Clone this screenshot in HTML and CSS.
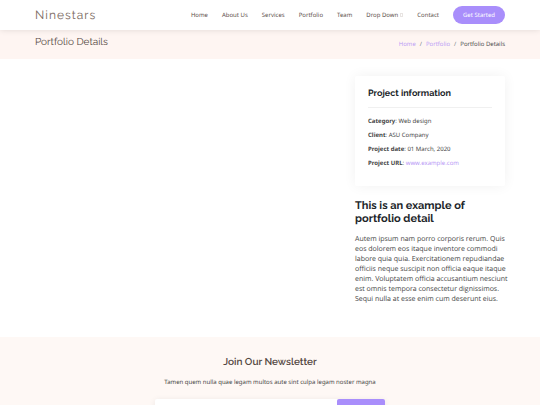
FILE: index.html
```html
<!DOCTYPE html>
<html lang="en">
<head>
    <meta charset="UTF-8">
    <meta name="viewport" content="width=device-width, initial-scale=1.0">
    <title>Portfolio Details - Ninestars</title>
    <link rel="stylesheet" href="styles.css">
</head>
<body>
    <header id="header">
        <div class="container bar">
            <a class="logo" href="#">Ninestars</a>
            <nav class="navbar">
                <a href="#">Home</a>
                <a href="#">About Us</a>
                <a href="#">Services</a>
                <a href="#">Portfolio</a>
                <a href="#">Team</a>
                <a href="#" class="dropdown">Drop Down <i class="glyph"></i></a>
                <a href="#">Contact</a>
                <a href="#" class="getstarted">Get Started</a>
            </nav>
        </div>
    </header>

    <main>
        <section class="breadcrumbs">
            <div class="container bar">
                <h2>Portfolio Details</h2>
                <ol>
                    <li><a href="#">Home</a></li>
                    <li><a href="#">Portfolio</a></li>
                    <li>Portfolio Details</li>
                </ol>
            </div>
        </section>

        <section class="portfolio-details">
            <div class="container details-grid">
                <div class="slider"></div>
                <div class="details">
                    <div class="portfolio-info">
                        <h3>Project information</h3>
                        <ul>
                            <li><strong>Category</strong>: Web design</li>
                            <li><strong>Client</strong>: ASU Company</li>
                            <li><strong>Project date</strong>: 01 March, 2020</li>
                            <li><strong>Project URL</strong>: <a href="#">www.example.com</a></li>
                        </ul>
                    </div>
                    <div class="portfolio-description">
                        <h2>This is an example of portfolio detail</h2>
                        <p>Autem ipsum nam porro corporis rerum. Quis eos dolorem eos itaque inventore commodi labore quia quia. Exercitationem repudiandae officiis neque suscipit non officia eaque itaque enim. Voluptatem officia accusantium nesciunt est omnis tempora consectetur dignissimos. Sequi nulla at esse enim cum deserunt eius.</p>
                    </div>
                </div>
            </div>
        </section>
    </main>

    <footer class="newsletter">
        <h4>Join Our Newsletter</h4>
        <p>Tamen quem nulla quae legam multos aute sint culpa legam noster magna</p>
        <form>
            <input type="email" name="email" aria-label="Email">
            <button type="submit">Subscribe</button>
        </form>
    </footer>
</body>
</html>
```
FILE: styles.css
```css
* {
    box-sizing: border-box;
}

body {
    margin: 0;
    font-family: "Open Sans", sans-serif;
    font-size: 7px;
    line-height: 10px;
    color: #444;
    background: #fff;
    text-rendering: geometricPrecision;
}

h2, h3, h4, p, ul, ol {
    margin: 0;
    padding: 0;
}

h2, h3, h4, .logo {
    font-family: "Raleway", "Lato", sans-serif;
}

ul, ol {
    list-style: none;
}

a {
    color: #b798f5;
    text-decoration: none;
}

.container {
    padding: 0 35px;
}

.bar {
    display: flex;
    align-items: center;
    justify-content: space-between;
}

.navbar, .portfolio-info ul, .newsletter {
    font-family: "Noto Sans", "Open Sans", sans-serif;
    font-size: 6px;
}

/* Header */
#header {
    position: relative;
    background: #fff;
    box-shadow: 0 0 6px rgba(0, 0, 0, 0.12);
}

#header .bar {
    height: 30px;
}

.logo {
    font-size: 12px;
    line-height: 16px;
    letter-spacing: 1px;
    color: #7a6960;
}

.navbar {
    display: flex;
    align-items: center;
    gap: 14px;
    white-space: nowrap;
}

.navbar a {
    color: #5c4f4a;
}

.dropdown {
    display: flex;
    align-items: center;
    gap: 2px;
}

.glyph {
    width: 3px;
    height: 4px;
    border: 1px solid #e8e4e2;
}

.navbar .getstarted {
    padding: 4px 10px;
    border-radius: 50px;
    color: #fff;
    background: #a98efb;
}

/* Breadcrumbs */
.breadcrumbs {
    padding: 6px 0 10px;
    background: #fef5f2;
}

.breadcrumbs .bar {
    align-items: flex-start;
}

.breadcrumbs h2 {
    font-size: 10px;
    line-height: 13px;
    font-weight: 400;
    color: #554843;
}

.breadcrumbs ol {
    display: flex;
    padding-top: 3px;
    font-size: 6px;
}

.breadcrumbs li + li::before {
    content: "/";
    padding: 0 4px;
    color: #6c757d;
}

/* Project */
.portfolio-details {
    padding: 17px 0 32px;
}

.details-grid {
    display: grid;
    grid-template-columns: 2fr 1fr;
    gap: 20px;
}

.portfolio-info {
    padding: 13px 13px 14px;
    border-radius: 2px;
    box-shadow: 0 0 13px rgba(0, 0, 0, 0.06);
}

.portfolio-info h3 {
    margin-bottom: 8px;
    padding-bottom: 7px;
    border-bottom: 1px solid #f0f0f0;
    font-size: 9px;
    line-height: 11px;
    color: #212529;
}

.portfolio-info li {
    margin-bottom: 4px;
}

.portfolio-description {
    margin-right: -6px;
    padding-top: 13px;
}

.portfolio-description h2 {
    margin-bottom: 10px;
    font-size: 11px;
    line-height: 13px;
    color: #212529;
}

/* Newsletter */
.newsletter {
    padding: 20px 35px 34px;
    background: #fef8f5;
    text-align: center;
}

.newsletter h4 {
    margin-bottom: 8px;
    font-size: 10px;
    line-height: 12px;
    font-weight: 600;
    color: #554843;
}

.newsletter form {
    display: flex;
    max-width: 230px;
    height: 16px;
    margin: 12px auto 0;
    border-radius: 2px;
    background: #fff;
    box-shadow: 0 1px 6px rgba(0, 0, 0, 0.08);
}

.newsletter input {
    flex: 1;
    min-width: 0;
    padding: 2px 4px;
    border: 0;
    background: none;
    font: inherit;
}

.newsletter button {
    width: 48px;
    padding: 0;
    border: 0;
    border-radius: 2px;
    color: #fff;
    background: #a98efb;
    font: inherit;
}
```
